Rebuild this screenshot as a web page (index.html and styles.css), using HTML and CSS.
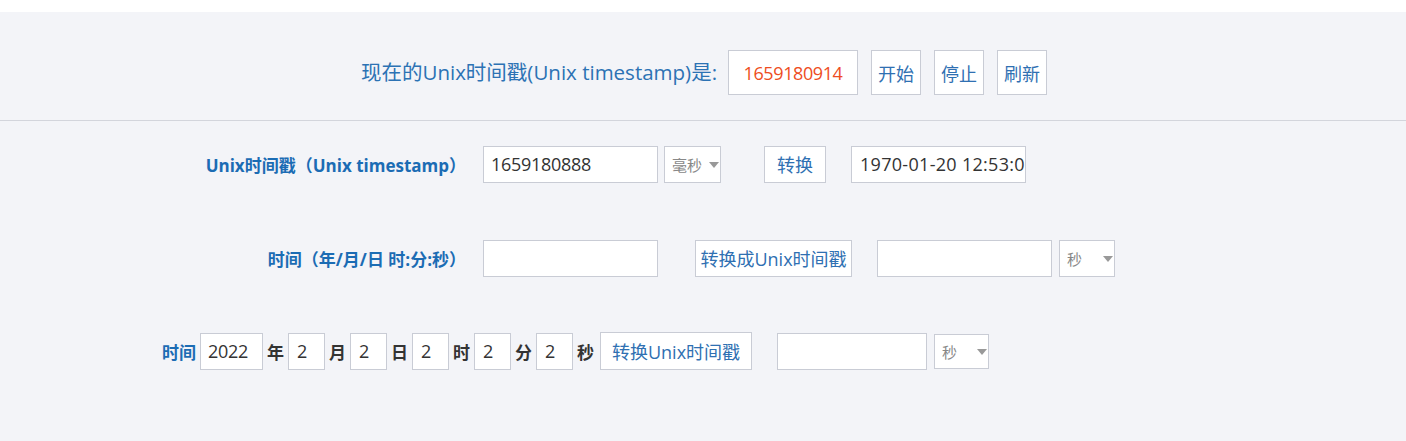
FILE: index.html
```html
<!DOCTYPE html>
<html lang="zh-CN">
<head>
<meta charset="utf-8">
<title>Unix时间戳</title>
<link rel="stylesheet" href="styles.css">
</head>
<body>
<div class="topbar"></div>
<main class="main">
  <section class="now">
    <span class="now-label">现在的Unix时间戳(Unix timestamp)是:</span>
    <span class="now-value">1659180914</span>
    <button class="btn btn-now">开始</button>
    <button class="btn btn-now">停止</button>
    <button class="btn btn-now">刷新</button>
  </section>

  <section class="rows">
    <div class="row row-1">
      <label class="row-label">Unix时间戳（Unix timestamp）</label>
      <input class="inp inp-wide" type="text" value="1659180888">
      <span class="sel sel-ms"><select><option>毫秒</option></select></span>
      <button class="btn btn-conv">转换</button>
      <input class="inp inp-wide inp-out" type="text" value="1970-01-20 12:53:00">
    </div>

    <div class="row row-2">
      <label class="row-label">时间（年/月/日 时:分:秒）</label>
      <input class="inp inp-wide" type="text" value="">
      <button class="btn btn-conv2">转换成Unix时间戳</button>
      <input class="inp inp-wide" type="text" value="">
      <span class="sel sel-s"><select><option>秒</option></select></span>
    </div>

    <div class="row row-3">
      <label class="short-label">时间</label>
      <input class="inp inp-year" type="text" value="2022">
      <span class="unit">年</span>
      <input class="inp inp-num" type="text" value="2">
      <span class="unit">月</span>
      <input class="inp inp-num" type="text" value="2">
      <span class="unit">日</span>
      <input class="inp inp-num" type="text" value="2">
      <span class="unit">时</span>
      <input class="inp inp-num" type="text" value="2">
      <span class="unit">分</span>
      <input class="inp inp-num" type="text" value="2">
      <span class="unit">秒</span>
      <button class="btn btn-conv3">转换Unix时间戳</button>
      <input class="inp inp-mid" type="text" value="">
      <span class="sel sel-s3"><select><option>秒</option></select></span>
    </div>
  </section>
</main>
</body>
</html>
```

FILE: styles.css
```css
* { box-sizing: border-box; }
html, body {
  margin: 0;
  padding: 0;
  background: #f3f4f8;
  font-family: "Open Sans", "Noto Sans CJK SC", sans-serif;
  overflow: hidden;
}
.topbar {
  height: 12px;
  background: #ffffff;
}
.main {
  background: #f3f4f8;
  height: 429px;
}
.now {
  height: 109px;
  border-bottom: 1px solid #d3d5dc;
  display: flex;
  justify-content: center;
  align-items: flex-start;
  padding-top: 38px;
  padding-left: 2px;
}
.now-label {
  font-size: 20.5px;
  color: #2c72b4;
  line-height: 44px;
  margin-right: 11px;
  letter-spacing: 0;
}
.now-value {
  display: inline-flex;
  align-items: center;
  justify-content: center;
  width: 130px;
  height: 45px;
  background: #fff;
  border: 1px solid #c9ccd5;
  color: #ee4d22;
  font-size: 18px;
  letter-spacing: -0.4px;
  margin-right: 13px;
}
.btn {
  font-family: "Open Sans", "Noto Sans CJK SC", sans-serif;
  background: #fff;
  border: 1px solid #c9ccd5;
  color: #2f70b2;
  font-size: 18px;
  padding: 0;
  cursor: pointer;
  display: inline-flex;
  align-items: center;
  justify-content: center;
  white-space: nowrap;
}
.btn-now {
  width: 50px;
  height: 45px;
  margin-right: 13px;
}
.btn-now:last-child { margin-right: 0; }

.rows {
  padding-top: 24px;
}
.row {
  display: flex;
  align-items: center;
  height: 38px;
}
.row-2 { margin-top: 56px; }
.row-3 { margin-top: 55px; }

.row-label {
  width: 336px;
  margin-left: 130px;
  margin-right: 17px;
  text-align: right;
  font-weight: bold;
  font-size: 17px;
  color: #1b6cb4;
  white-space: nowrap;
}
.short-label {
  margin-left: 162px;
  margin-right: 4px;
  font-weight: bold;
  font-size: 17px;
  color: #1b6cb4;
}
.inp {
  font-family: "Open Sans", "Noto Sans CJK SC", sans-serif;
  height: 37px;
  background: #fff;
  border: 1px solid #c9ccd5;
  font-size: 18px;
  color: #333;
  padding: 0 0 0 7px;
  outline: none;
  margin: 0;
  letter-spacing: -0.3px;
}
.inp-wide { width: 175px; }
.inp-out { padding-left: 8px; letter-spacing: 0.3px; }
.inp-year { width: 63px; }
.inp-num { width: 37px; padding-left: 8px; }
.inp-mid { width: 150px; }

.unit {
  font-weight: bold;
  font-size: 17px;
  color: #333;
  width: 25px;
  text-align: center;
}

.sel {
  position: relative;
  display: inline-block;
}
.sel select {
  -webkit-appearance: none;
  appearance: none;
  font-family: "Noto Sans CJK SC", sans-serif;
  height: 37px;
  background: #fff;
  border: 1px solid #c9ccd5;
  border-radius: 0;
  color: #888;
  font-size: 15px;
  padding: 0 0 0 7px;
  outline: none;
  margin: 0;
  display: block;
}
.sel::after {
  content: "";
  position: absolute;
  top: 16px;
  right: 2px;
  border-left: 5px solid transparent;
  border-right: 5px solid transparent;
  border-top: 6px solid #999;
  pointer-events: none;
}
.sel-ms { margin-left: 6px; }
.sel-ms select { width: 57px; }
.sel-s { margin-left: 7px; }
.sel-s select { width: 56px; }
.sel-s3 { margin-left: 7px; }
.sel-s3 select { width: 55px; height: 35px; }
.sel-s3::after { top: 15px; }

.btn-conv {
  width: 62px;
  height: 37px;
  margin-left: 43px;
  margin-right: 25px;
}
.btn-conv2 {
  width: 157px;
  height: 37px;
  margin-left: 37px;
  margin-right: 25px;
}
.btn-conv3 {
  width: 152px;
  height: 38px;
  margin-left: 2px;
  margin-right: 25px;
}
```
